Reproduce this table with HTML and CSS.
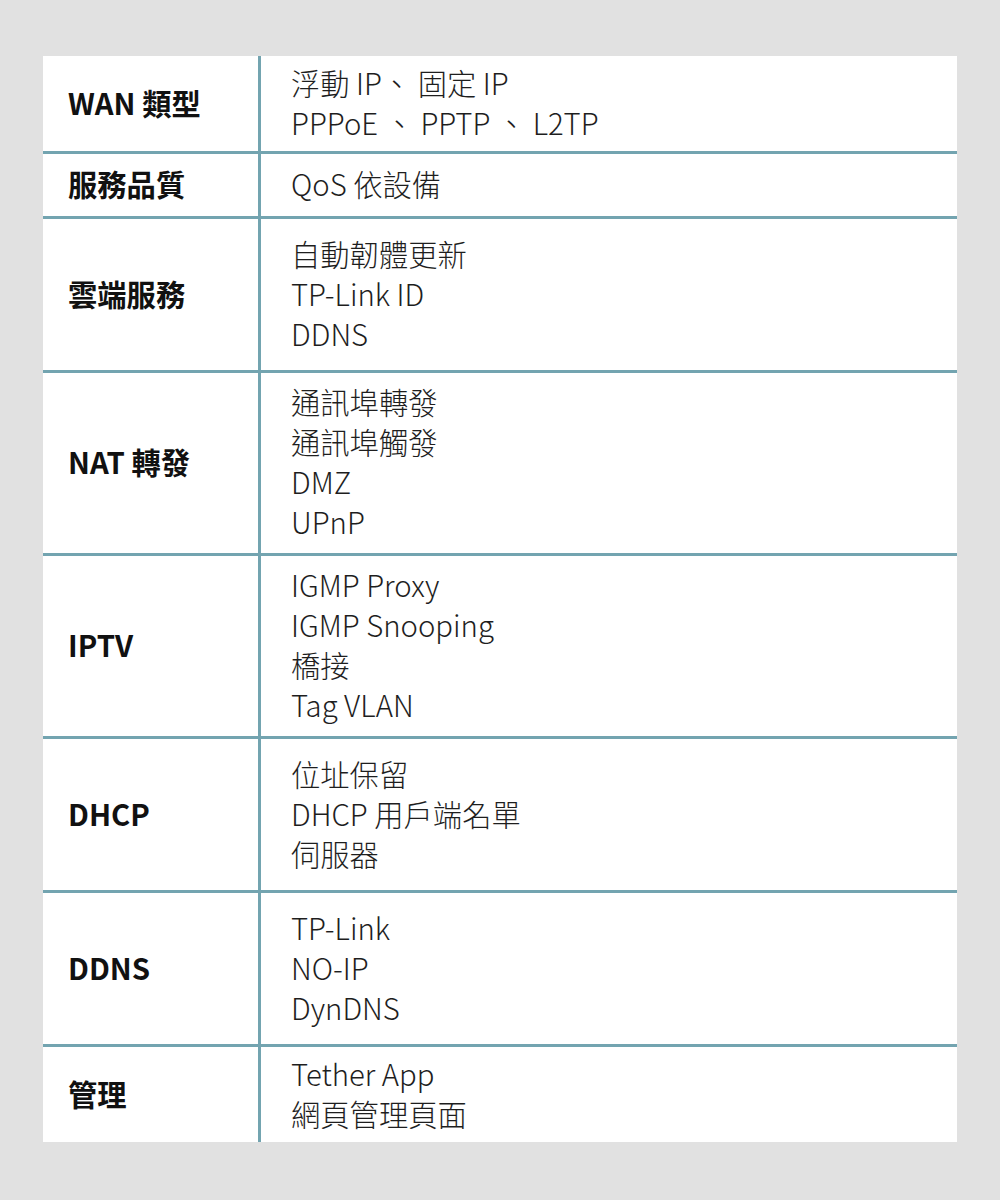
FILE: index.html
```html
<!DOCTYPE html>
<html lang="zh-Hant">
<head>
<meta charset="utf-8">
<title>規格</title>
<link rel="stylesheet" href="styles.css">
</head>
<body>
<div class="spec">
  <div class="label r2">WAN 類型</div>
  <div class="value r2"><div>浮動 IP、 固定 IP</div><div>PPPoE 、 PPTP 、 L2TP</div></div>

  <div class="label r1">服務品質</div>
  <div class="value r1"><div>QoS 依設備</div></div>

  <div class="label r3">雲端服務</div>
  <div class="value r3"><div>自動韌體更新</div><div>TP-Link ID</div><div>DDNS</div></div>

  <div class="label r4">NAT 轉發</div>
  <div class="value r4"><div>通訊埠轉發</div><div>通訊埠觸發</div><div>DMZ</div><div>UPnP</div></div>

  <div class="label r4">IPTV</div>
  <div class="value r4"><div>IGMP Proxy</div><div>IGMP Snooping</div><div>橋接</div><div>Tag VLAN</div></div>

  <div class="label r3">DHCP</div>
  <div class="value r3"><div>位址保留</div><div>DHCP 用戶端名單</div><div>伺服器</div></div>

  <div class="label r3">DDNS</div>
  <div class="value r3"><div>TP-Link</div><div>NO-IP</div><div>DynDNS</div></div>

  <div class="label r2">管理</div>
  <div class="value r2"><div>Tether App</div><div>網頁管理頁面</div></div>
</div>
</body>
</html>
```

FILE: styles.css
```css
html, body {
  margin: 0;
  padding: 0;
  background: #e1e1e1;
}
body {
  padding: 56px 43px 0 43px;
  font-family: "Noto Sans CJK TC", "Noto Sans", sans-serif;
}
.spec {
  width: 914px;
  display: grid;
  grid-template-columns: 215px 696px;
  column-gap: 3px;
  row-gap: 3px;
  background: #73a4b0;
}
.label, .value {
  box-sizing: border-box;
  background: #ffffff;
  display: flex;
  flex-direction: column;
  justify-content: center;
  padding-bottom: 4px;
}
.label {
  padding-left: 25px;
  font-size: 29.3px;
  font-weight: 700;
  color: #111111;
}
.value {
  padding-left: 30px;
  font-size: 29.3px;
  font-weight: 300;
  line-height: 40px;
  color: #1e1e1e;
}
.r1 { height: 62px; }
.r2 { height: 95px; }
.r3 { height: 151px; }
.r4 { height: 180px; }
```
